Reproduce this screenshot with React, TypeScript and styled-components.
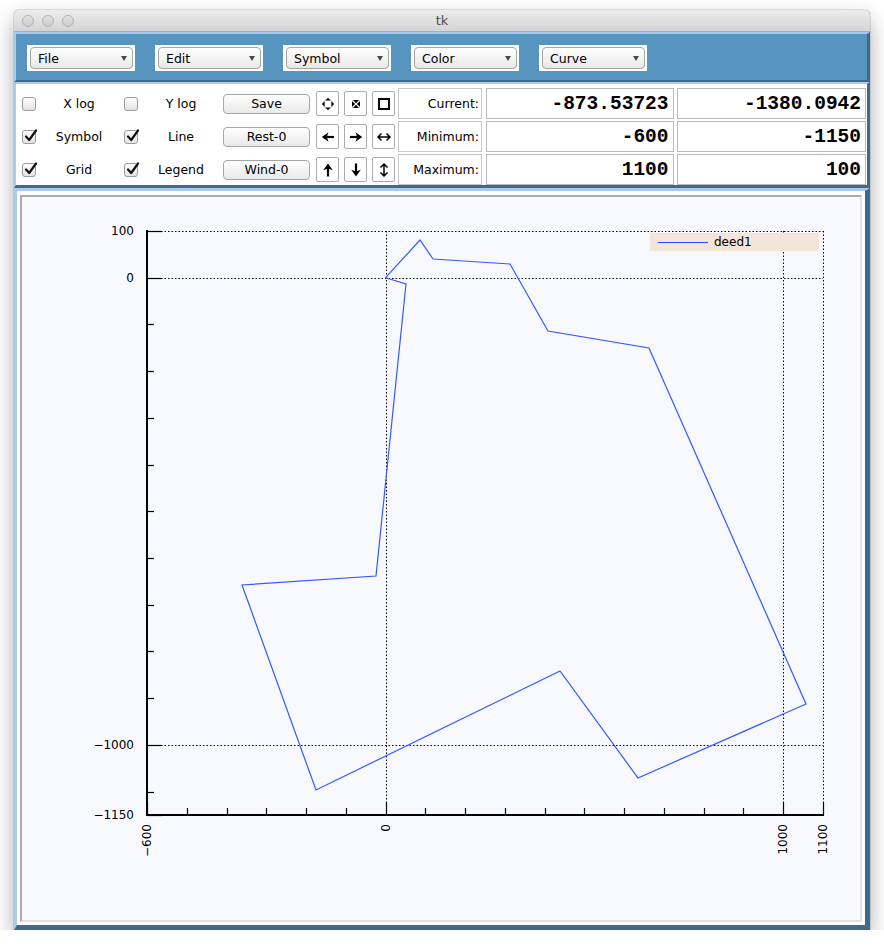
import React from 'react';
import styled, { createGlobalStyle } from 'styled-components';

const Global = createGlobalStyle`
  html, body { margin: 0; padding: 0; background: #ffffff; }
  body { font-family: "DejaVu Sans", "Liberation Sans", sans-serif; }
  * { box-sizing: border-box; }
`;

const Page = styled.div`
  padding: 10px 0 0 14px;
`;

const Window = styled.div`
  width: 856px;
  height: 920px;
  display: flex;
  flex-direction: column;
  border-radius: 5px 5px 0 0;
  box-shadow: 0 0 0 1px rgba(0, 0, 0, 0.1), 0 10px 22px rgba(0, 0, 0, 0.32);
  background: #5795c0;
`;

const TitleBar = styled.div`
  flex: none;
  height: 22px;
  display: grid;
  grid-template-columns: 1fr auto 1fr;
  align-items: center;
  background: linear-gradient(#ededed, #d4d4d4);
  border-bottom: 1px solid #adadad;
  border-radius: 5px 5px 0 0;
`;

const Lights = styled.div`
  display: flex;
  gap: 8px;
  padding-left: 8px;
`;

const Light = styled.span`
  width: 12px;
  height: 12px;
  border-radius: 50%;
  border: 1px solid #b3b3b3;
  background: linear-gradient(#e2e2e2, #cdcdcd);
`;

const Title = styled.div`
  font-size: 13px;
  color: #4f4f4f;
`;

const relief = `
  border-style: solid;
  border-color: #a9c9f1 #3d6a8d #3d6a8d #a9c9f1;
`;

const MenuBar = styled.div`
  flex: none;
  height: 50px;
  ${relief}
  border-width: 2px 3px 2px 2px;
  background: #5795c0;
  display: flex;
  align-items: flex-start;
  gap: 20px;
  padding: 11px 0 0 11px;
`;

const MenuHolder = styled.div`
  width: 108px;
  height: 26px;
  background: #ffffff;
  padding: 2px 2px 2px 3px;
`;

const PopupButton = styled.div`
  height: 22px;
  border: 1px solid #a4a4a4;
  border-radius: 4px;
  background: linear-gradient(#ffffff, #e8e8e8);
  display: flex;
  align-items: center;
  justify-content: space-between;
  padding: 0 5px 0 7px;
  font-size: 12.5px;
  color: #000;
`;

const PopArrow = styled.span`
  width: 0;
  height: 0;
  border-left: 3.5px solid transparent;
  border-right: 3.5px solid transparent;
  border-top: 5px solid #4a4a4a;
`;

const ToolBar = styled.div`
  flex: none;
  height: 106px;
  ${relief}
  border-width: 2px 3px 3px 2px;
  background: #ffffff;
  display: flex;
  gap: 2px;
  padding: 4px 0 0 2px;
`;

const Controls = styled.div`
  display: grid;
  grid-template-columns: 102px 102px 94px 28px 28px 24px;
  grid-template-rows: repeat(3, 31px);
  row-gap: 2px;
  align-items: center;
`;

const CheckItem = styled.label`
  display: flex;
  align-items: center;
  padding-left: 4px;
  font-size: 12.5px;
  color: #000;
`;

const CheckBox = styled.span`
  flex: none;
  width: 14px;
  height: 14px;
  border: 1px solid #9c9c9c;
  border-radius: 3px;
  background: linear-gradient(#fdfdfd, #e3e3e3);
  position: relative;
  svg {
    position: absolute;
    left: 1px;
    top: -2px;
  }
`;

const CheckText = styled.span`
  flex: 1;
  text-align: center;
  padding-left: 2px;
`;

const PushButton = styled.button`
  margin-left: 1px;
  width: 87px;
  height: 20px;
  border: 1px solid #a6a6a6;
  border-radius: 4px;
  background: linear-gradient(#ffffff, #e9e9e9);
  font-family: "DejaVu Sans", sans-serif;
  font-size: 12.5px;
  color: #000;
  padding: 0;
  display: flex;
  align-items: center;
  justify-content: center;
`;

const IconButton = styled.button`
  width: 23px;
  height: 25px;
  border: 1px solid #ababab;
  border-radius: 2px;
  background: #ffffff;
  padding: 0;
  display: flex;
  align-items: center;
  justify-content: center;
`;

const Fields = styled.div`
  display: grid;
  grid-template-columns: 84px 188px 189px;
  grid-template-rows: repeat(3, 31px);
  column-gap: 3.5px;
  row-gap: 2px;
`;

const FieldLabel = styled.div`
  border: 1px solid #c8c8c8;
  display: flex;
  align-items: center;
  justify-content: flex-end;
  padding-right: 2px;
  font-size: 12.5px;
  color: #000;
`;

const FieldValue = styled.div`
  border: 1px solid #bababa;
  display: flex;
  align-items: center;
  justify-content: flex-end;
  padding-right: 4px;
  font-family: "Liberation Mono", "Courier New", monospace;
  font-weight: bold;
  font-size: 19.5px;
  color: #000;
`;

const PlotFrame = styled.div`
  flex: 1;
  ${relief}
  border-width: 3px 5px 5px 3px;
  background: #ffffff;
  padding: 4px 3px 3px 3px;
  display: flex;
`;

const Canvas = styled.div`
  flex: 1;
  border: 2px solid;
  border-color: #a9a9a9 #e1e1e5 #e1e1e5 #a9a9a9;
  background: #f8f9ff;
  svg {
    display: block;
  }
`;

type IconKind = 'move' | 'shrink' | 'square' | 'left' | 'right' | 'hboth' | 'up' | 'down' | 'vboth';

const Icon = ({ kind }: { kind: IconKind }) => {
  const common = { width: 14, height: 14, viewBox: '0 0 14 14' };
  switch (kind) {
    case 'move':
      return (
        <svg {...common}>
          <circle cx="7" cy="7" r="4.8" fill="none" stroke="#777" strokeWidth="0.7" />
          <polygon points="7,0.8 4.6,3.6 9.4,3.6" fill="#000" />
          <polygon points="7,13.2 4.6,10.4 9.4,10.4" fill="#000" />
          <polygon points="0.8,7 3.6,4.6 3.6,9.4" fill="#000" />
          <polygon points="13.2,7 10.4,4.6 10.4,9.4" fill="#000" />
        </svg>
      );
    case 'shrink':
      return (
        <svg {...common}>
          <rect x="3.5" y="3.5" width="7" height="7" fill="none" stroke="#888" strokeWidth="0.6" strokeDasharray="1 1" />
          <polygon points="4,3 10,3 7,6.3" fill="#000" />
          <polygon points="4,11 10,11 7,7.7" fill="#000" />
          <polygon points="3,4.2 3,9.8 6.2,7" fill="#000" />
          <polygon points="11,4.2 11,9.8 7.8,7" fill="#000" />
        </svg>
      );
    case 'square':
      return (
        <svg {...common}>
          <rect x="2" y="2" width="10" height="10" fill="none" stroke="#000" strokeWidth="2" />
        </svg>
      );
    case 'left':
      return (
        <svg {...common}>
          <line x1="5" y1="7" x2="13" y2="7" stroke="#000" strokeWidth="2.2" />
          <polygon points="0.8,7 7.5,2.2 5.8,7 7.5,11.8" fill="#000" />
        </svg>
      );
    case 'right':
      return (
        <svg {...common}>
          <line x1="1" y1="7" x2="9" y2="7" stroke="#000" strokeWidth="2.2" />
          <polygon points="13.2,7 6.5,2.2 8.2,7 6.5,11.8" fill="#000" />
        </svg>
      );
    case 'up':
      return (
        <svg {...common}>
          <line x1="7" y1="5" x2="7" y2="13.5" stroke="#000" strokeWidth="2.2" />
          <polygon points="7,0.5 2.2,7.2 7,5.5 11.8,7.2" fill="#000" />
        </svg>
      );
    case 'down':
      return (
        <svg {...common}>
          <line x1="7" y1="0.5" x2="7" y2="9" stroke="#000" strokeWidth="2.2" />
          <polygon points="7,13.5 2.2,6.8 7,8.5 11.8,6.8" fill="#000" />
        </svg>
      );
    case 'hboth':
      return (
        <svg {...common}>
          <path d="M4.5 3.5 L1 7 L4.5 10.5 M9.5 3.5 L13 7 L9.5 10.5 M1 7 H13" fill="none" stroke="#000" strokeWidth="1.5" />
        </svg>
      );
    case 'vboth':
      return (
        <svg {...common}>
          <path d="M3.5 4.5 L7 1 L10.5 4.5 M3.5 9.5 L7 13 L10.5 9.5 M7 1 V13" fill="none" stroke="#000" strokeWidth="1.5" />
        </svg>
      );
  }
};

const Check = ({ label, checked }: { label: string; checked: boolean }) => (
  <CheckItem>
    <CheckBox>
      {checked && (
        <svg width="14" height="14" viewBox="0 0 14 14">
          <path d="M2 7.5 L5.2 11 L12 1.5" fill="none" stroke="#111" strokeWidth="2.2" strokeLinecap="round" strokeLinejoin="round" />
        </svg>
      )}
    </CheckBox>
    <CheckText>{label}</CheckText>
  </CheckItem>
);

const menus = ['File', 'Edit', 'Symbol', 'Color', 'Curve'];

const rows: { checks: [string, boolean][]; button: string; icons: IconKind[]; label: string; a: string; b: string }[] = [
  { checks: [['X log', false], ['Y log', false]], button: 'Save', icons: ['move', 'shrink', 'square'], label: 'Current:', a: '-873.53723', b: '-1380.0942' },
  { checks: [['Symbol', true], ['Line', true]], button: 'Rest-0', icons: ['left', 'right', 'hboth'], label: 'Minimum:', a: '-600', b: '-1150' },
  { checks: [['Grid', true], ['Legend', true]], button: 'Wind-0', icons: ['up', 'down', 'vboth'], label: 'Maximum:', a: '1100', b: '100' },
];

// plot geometry in page coordinates
const X0 = 147;
const X1 = 823;
const Y0 = 231;
const Y1 = 815;
const xs = (v: number) => X0 + ((v + 600) * (X1 - X0)) / 1700;
const ys = (v: number) => Y0 + ((100 - v) * (Y1 - Y0)) / 1250;
const px = (v: number) => Math.round(v) + 0.5;

const yTicks: number[] = [100, 0, -100, -200, -300, -400, -500, -600, -700, -800, -900, -1000, -1100, -1150];
const yMajor = [100, 0, -1000, -1150];
const xTicks: number[] = Array.from({ length: 18 }, (_, i) => -600 + i * 100);
const xMajor = [-600, 0, 1000, 1100];

const fmt = (v: number) => (v < 0 ? '\u2212' + Math.abs(v) : String(v));

const dataPts: [number, number][] = [
  [385.6, 277.7],
  [420, 240],
  [433, 259],
  [510, 264],
  [548, 331],
  [649, 348],
  [806, 704],
  [638, 778],
  [560, 671],
  [316, 790],
  [242, 585],
  [376, 576],
  [406, 284],
  [385.6, 277.7],
];

const AxisText = styled.text`
  font-family: "DejaVu Sans", sans-serif;
  font-size: 12px;
  fill: #000;
`;

const Plot = () => (
  <svg width={838} height={723} viewBox="22 197 838 723">
    {/* grid */}
    <g stroke="#000" strokeWidth={1} strokeDasharray="1.5 2">
      {[100, 0, -1000].map((v) => (
        <line key={'gh' + v} x1={X0} x2={X1} y1={px(ys(v))} y2={px(ys(v))} />
      ))}
      {[0, 1000, 1100].map((v) => (
        <line key={'gv' + v} x1={px(xs(v))} x2={px(xs(v))} y1={Y0} y2={Y1} />
      ))}
    </g>
    {/* axes */}
    <g stroke="#000" strokeWidth={2}>
      <line x1={X0} x2={X0} y1={Y0 - 1} y2={Y1 + 1} />
      <line x1={X0 - 1} x2={X1 + 1} y1={Y1} y2={Y1} />
    </g>
    <g stroke="#000" strokeWidth={1.2}>
      {yTicks.map((v) => (
        <line key={'yt' + v} x1={X0} x2={X0 + (yMajor.includes(v) ? 15 : 7)} y1={px(ys(v))} y2={px(ys(v))} />
      ))}
      {xTicks.map((v) => (
        <line key={'xt' + v} x1={px(xs(v))} x2={px(xs(v))} y1={Y1} y2={Y1 - (xMajor.includes(v) ? 13 : 7)} />
      ))}
    </g>
    {yMajor.map((v) => (
      <AxisText key={'yl' + v} x={134} y={ys(v)} textAnchor="end" dominantBaseline="central">
        {fmt(v)}
      </AxisText>
    ))}
    {xMajor.map((v) => (
      <AxisText
        key={'xl' + v}
        transform={`translate(${xs(v)} 824) rotate(-90)`}
        textAnchor="end"
        dominantBaseline="central"
      >
        {fmt(v)}
      </AxisText>
    ))}
    {/* legend */}
    <rect x={650} y={233} width={169} height={18} fill="#f2e6d8" />
    <line x1={658} x2={708} y1={242.5} y2={242.5} stroke="#2547ff" strokeWidth={1.2} />
    <AxisText x={714} y={242} dominantBaseline="central">
      deed1
    </AxisText>
    {/* data */}
    <polyline
      points={dataPts.map(([x, y]) => `${x},${y}`).join(' ')}
      fill="none"
      stroke="#3358ff"
      strokeWidth={1.2}
      strokeLinejoin="miter"
    />
  </svg>
);

export default function App() {
  return (
    <>
      <Global />
      <Page>
        <Window>
          <TitleBar>
            <Lights>
              <Light />
              <Light />
              <Light />
            </Lights>
            <Title>tk</Title>
            <span />
          </TitleBar>
          <MenuBar>
            {menus.map((m) => (
              <MenuHolder key={m}>
                <PopupButton>
                  <span>{m}</span>
                  <PopArrow />
                </PopupButton>
              </MenuHolder>
            ))}
          </MenuBar>
          <ToolBar>
            <Controls>
              {rows.map((r) => (
                <React.Fragment key={r.button}>
                  {r.checks.map(([l, c]) => (
                    <Check key={l} label={l} checked={c} />
                  ))}
                  <PushButton>{r.button}</PushButton>
                  {r.icons.map((k) => (
                    <IconButton key={k}>
                      <Icon kind={k} />
                    </IconButton>
                  ))}
                </React.Fragment>
              ))}
            </Controls>
            <Fields>
              {rows.map((r) => (
                <React.Fragment key={r.label}>
                  <FieldLabel>{r.label}</FieldLabel>
                  <FieldValue>{r.a}</FieldValue>
                  <FieldValue>{r.b}</FieldValue>
                </React.Fragment>
              ))}
            </Fields>
          </ToolBar>
          <PlotFrame>
            <Canvas>
              <Plot />
            </Canvas>
          </PlotFrame>
        </Window>
      </Page>
    </>
  );
}
